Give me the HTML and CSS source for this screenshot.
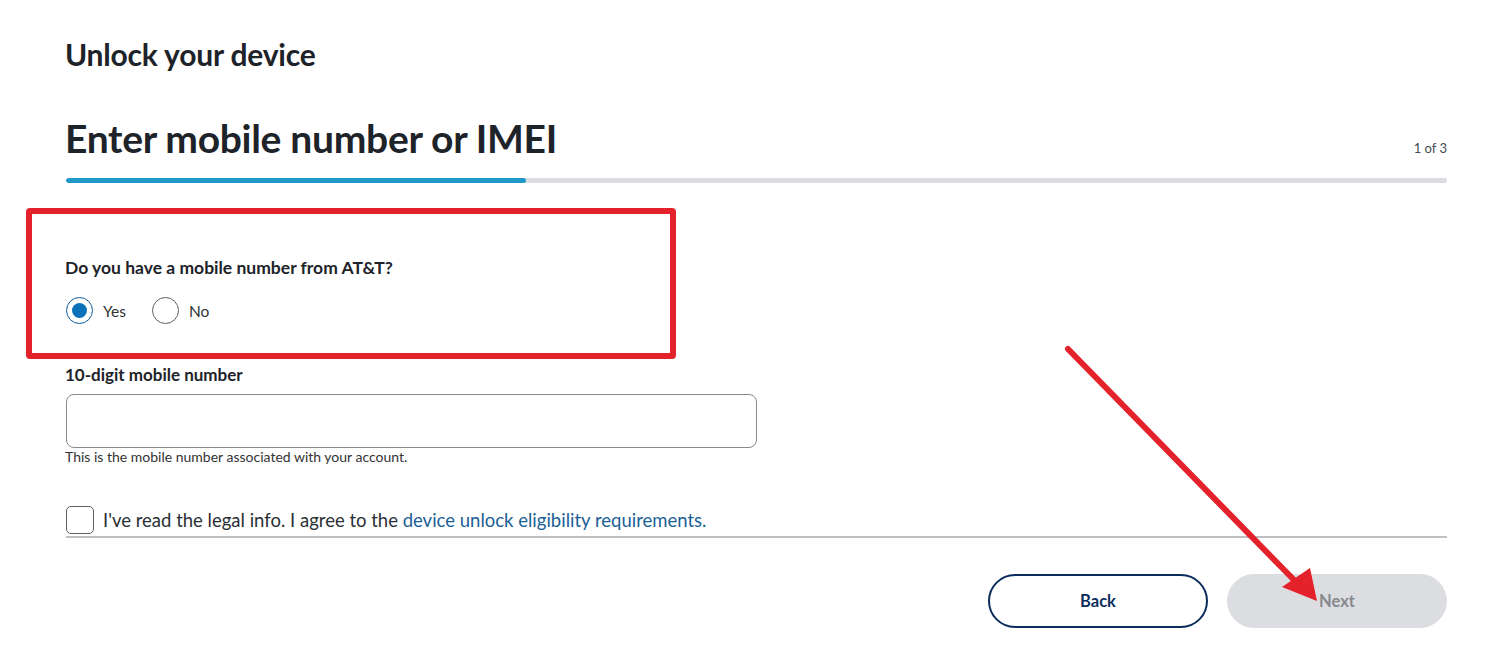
FILE: index.html
```html
<!DOCTYPE html>
<html>
<head>
<meta charset="utf-8">
<link rel="stylesheet" href="styles.css">
</head>
<body>
<main class="page">
  <h1 class="title">Unlock your device</h1>
  <div class="step-head">
    <h2 class="step-title">Enter mobile number or IMEI</h2>
    <span class="step-count">1 of 3</span>
  </div>
  <div class="progress"><div class="progress-fill" style="width:33.3%"></div></div>

  <section class="question">
    <p class="q-label">Do you have a mobile number from AT&amp;T?</p>
    <div class="radios">
      <label class="radio"><span class="radio-circle checked"></span>Yes</label>
      <label class="radio"><span class="radio-circle"></span>No</label>
    </div>
  </section>

  <section class="field">
    <p class="f-label">10-digit mobile number</p>
    <div class="input"></div>
    <p class="helper">This is the mobile number associated with your account.</p>
  </section>

  <div class="agree">
    <span class="checkbox"></span>
    <span class="agree-text">I've read the legal info. I agree to the <a class="link">device unlock eligibility requirements.</a></span>
  </div>

  <div class="actions">
    <button class="btn btn-back">Back</button>
    <button class="btn btn-next">Next</button>
  </div>
</main>

<div class="annot-box"></div>
<svg class="annot-arrow" width="1501" height="662" viewBox="0 0 1501 662">
  <line x1="1068" y1="349" x2="1296" y2="582" stroke="#e3222b" stroke-width="6" stroke-linecap="round"/>
  <polygon points="1317,601 1282,587 1310,568" fill="#e3222b"/>
</svg>
</body>
</html>
```

FILE: styles.css
```css
* { box-sizing: border-box; }
html, body { margin: 0; padding: 0; background: #fff; }
body {
  font-family: "Lato", "Liberation Sans", sans-serif;
  color: #1d2329;
  width: 1501px;
  height: 662px;
  overflow: hidden;
  position: relative;
}
.page {
  padding: 35px 54px 0 65px;
}
.title {
  margin: 0;
  font-size: 30px;
  line-height: 38px;
  font-weight: 700;
  letter-spacing: -0.2px;
}
.step-head {
  margin-top: 42px;
  display: flex;
  justify-content: space-between;
  align-items: flex-end;
}
.step-title {
  margin: 0;
  font-size: 39px;
  line-height: 46px;
  font-weight: 700;
  letter-spacing: -0.3px;
}
.step-count {
  font-size: 13px;
  color: #454b52;
  padding-bottom: 5px;
}
.progress {
  margin-top: 17px;
  margin-left: 1px;
  height: 5px;
  background: #dcdde0;
  border-radius: 3px;
  overflow: hidden;
}
.progress-fill {
  height: 100%;
  background: #1f97c8;
  border-radius: 3px;
}
.question {
  padding-top: 74px;
}
.q-label {
  margin: 0;
  font-size: 17.5px;
  font-weight: 700;
  line-height: 22px;
}
.radios {
  margin-top: 18px;
  margin-left: 1px;
  display: flex;
  gap: 26px;
}
.radio {
  display: flex;
  align-items: center;
  gap: 10px;
  font-size: 15.5px;
  color: #333;
}
.radio-circle {
  width: 27px;
  height: 27px;
  border-radius: 50%;
  border: 1.5px solid #5a6068;
  display: flex;
  align-items: center;
  justify-content: center;
}
.radio-circle.checked { border-color: #0a5a9c; }
.radio-circle.checked::after {
  content: "";
  width: 15px;
  height: 15px;
  border-radius: 50%;
  background: #0b72b9;
}
.field {
  margin-top: 40px;
}
.f-label {
  margin: 0;
  font-size: 17px;
  font-weight: 700;
  line-height: 22px;
}
.input {
  margin-top: 8px;
  margin-left: 1px;
  width: 691px;
  height: 54px;
  border: 1px solid #878b90;
  border-radius: 8px;
}
.helper {
  margin: 0;
  font-size: 14px;
  line-height: 18px;
  color: #333;
}
.agree {
  margin-top: 40px;
  margin-left: 1px;
  display: flex;
  align-items: center;
  gap: 9px;
  padding-bottom: 2px;
  border-bottom: 2px solid #bdbfc2;
}
.checkbox {
  width: 28px;
  height: 28px;
  border: 1px solid #5a6068;
  border-radius: 5px;
}
.agree-text {
  font-size: 18.5px;
  color: #2a2f35;
}
.link { color: #1b5f96; }
.actions {
  margin-top: 36px;
  display: flex;
  justify-content: flex-end;
  gap: 19px;
}
.btn {
  width: 220px;
  height: 54px;
  border-radius: 27px;
  font-family: inherit;
  font-size: 16.5px;
  font-weight: 700;
}
.btn-back {
  background: #fff;
  border: 2px solid #0b2d5c;
  color: #0b2d5c;
}
.btn-next {
  background: #dcdde0;
  border: none;
  color: #86898e;
}
.annot-box {
  position: absolute;
  left: 26px;
  top: 208px;
  width: 650px;
  height: 151px;
  border: 6px solid #e3222b;
  border-radius: 4px;
}
.annot-arrow {
  position: absolute;
  left: 0;
  top: 0;
  pointer-events: none;
}
```
